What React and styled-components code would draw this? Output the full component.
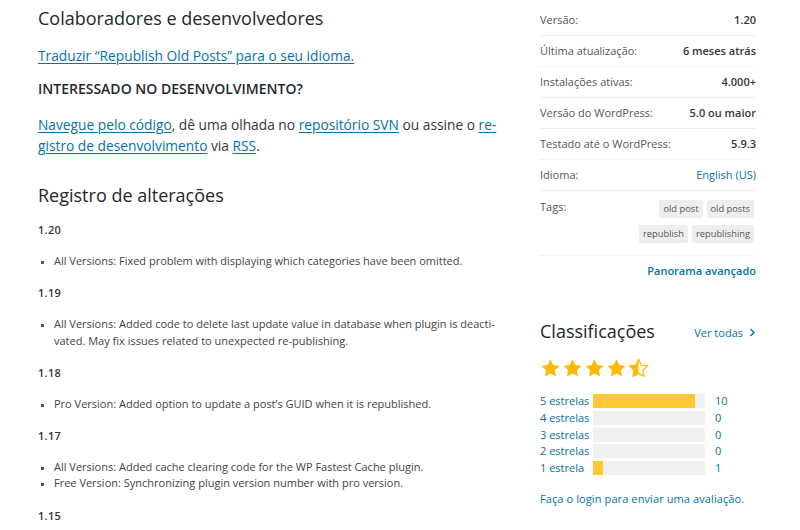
import React from "react";
import styled, { createGlobalStyle } from "styled-components";

const Global = createGlobalStyle`
  html, body { margin: 0; padding: 0; background: #fff; }
  body { font-family: "Open Sans", "Noto Sans", sans-serif; color: #32373c; }
  * { box-sizing: border-box; }
`;

const Page = styled.div`
  display: flex;
  gap: 43px;
  padding: 0 44px 0 38px;
  width: 800px;
  height: 530px;
  overflow: hidden;
`;

const Main = styled.main`
  width: 459px;
  flex: none;
  padding-top: 6px;
`;

const Side = styled.aside`
  width: 216px;
  flex: none;
  padding-top: 5px;
`;

const H2 = styled.h2`
  margin: ${(p) => p.$mt || 0}px 0 0;
  font-size: 18px;
  line-height: 24px;
  font-weight: 400;
  color: #23282d;
`;

const Para = styled.p`
  margin: ${(p) => p.$mt || 0}px 0 0;
  font-size: 13.75px;
  line-height: 21px;
  color: #32373c;
`;

const A = styled.a`
  color: #0073aa;
  text-decoration: underline;
  text-underline-offset: 2px;
`;

const H3 = styled.h3`
  margin: 13.5px 0 0;
  font-size: 14px;
  line-height: 20px;
  font-weight: 600;
  color: #23282d;
`;

const Version = styled.h4`
  margin: ${(p) => p.$mt || 0}px 0 0;
  font-size: 11px;
  line-height: 16px;
  font-weight: 600;
  letter-spacing: 0.3px;
  color: #32373c;
`;

const List = styled.ul`
  margin: 15px 0 16px;
  padding: 0 0 0 16px;
  list-style: square;
  font-size: 11px;
  line-height: 16.3px;
  color: #444;
  li::marker { font-size: 9px; color: #555; }
`;

const Row = styled.div`
  display: flex;
  justify-content: space-between;
  align-items: flex-start;
  padding: ${(p) => (p.$tags ? "8px 0 12px" : "7px 0")};
  border-bottom: 1px ${(p) => (p.$dotted ? "dotted" : "solid")} #eee;
  font-size: 11px;
  line-height: 16px;
`;

const Label = styled.span`
  color: #555;
`;

const Value = styled.strong`
  font-weight: 600;
  color: #32373c;
`;

const ValueLink = styled.a`
  color: #0073aa;
  text-decoration: none;
`;

const Tags = styled.div`
  display: flex;
  flex-wrap: wrap;
  justify-content: flex-end;
  gap: 7px 4px;
  width: 124px;
  margin-right: 2px;
  margin-top: 1px;
`;

const Tag = styled.a`
  background: #eee;
  color: #555;
  font-size: 9.3px;
  line-height: 18px;
  padding: 0 4px;
  border-radius: 2px;
  text-decoration: none;
`;

const Advanced = styled.a`
  display: block;
  text-align: right;
  margin-top: 7px;
  font-size: 11px;
  line-height: 16px;
  font-weight: 600;
  color: #0073aa;
  text-decoration: none;
`;

const RatingHead = styled.div`
  display: flex;
  justify-content: space-between;
  align-items: center;
  margin-top: 40px;
`;

const SideTitle = styled.h2`
  margin: 0;
  font-size: 18px;
  line-height: 24px;
  font-weight: 400;
  color: #23282d;
`;

const SeeAll = styled.a`
  display: flex;
  align-items: center;
  gap: 6px;
  font-size: 11px;
  color: #0073aa;
  text-decoration: none;
  margin-top: 3px;
`;

const Stars = styled.div`
  display: flex;
  gap: 1px;
  margin-top: 15px;
  height: 22px;
`;

const Bars = styled.div`
  display: flex;
  flex-direction: column;
  gap: 2.8px;
  margin-top: 14px;
`;

const BarRow = styled.div`
  display: grid;
  grid-template-columns: 49px 116px auto;
  align-items: center;
  font-size: 11px;
  line-height: 14px;
`;

const BarLabel = styled.a`
  color: #0073aa;
  text-decoration: none;
  white-space: nowrap;
`;

const Track = styled.div`
  height: 14px;
  margin: 0 0 0 4px;
  background-color: #f0f0f0;
  background-image: radial-gradient(#e4e4e4 0.6px, transparent 0.7px);
  background-size: 2px 2px;
`;

const Fill = styled.div`
  height: 100%;
  background: #ffc733;
`;

const Count = styled.span`
  color: #0073aa;
  margin-left: 10px;
`;

const Login = styled.a`
  display: block;
  margin-top: 16px;
  font-size: 11px;
  line-height: 16px;
  color: #0073aa;
  text-decoration: none;
  letter-spacing: 0.1px;
`;

const STAR = "M12 1.5l3.1 6.6 7.2.9-5.3 5 1.4 7.1L12 17.6l-6.4 3.5 1.4-7.1-5.3-5 7.2-.9z";

const Star = ({ half }) => (
  <svg width="21" height="21" viewBox="0 0 24 24">
    {half ? (
      <>
        <defs>
          <clipPath id="halfclip">
            <rect x="0" y="0" width="12" height="24" />
          </clipPath>
        </defs>
        <path d={STAR} fill="none" stroke="#ffb900" strokeWidth="1.4" strokeLinejoin="round" />
        <path d={STAR} fill="#ffb900" clipPath="url(#halfclip)" />
      </>
    ) : (
      <path d={STAR} fill="#ffb900" />
    )}
  </svg>
);

const meta = [
  ["Versão:", "1.20"],
  ["Última atualização:", "6 meses atrás", true],
  ["Instalações ativas:", "4.000+"],
  ["Versão do WordPress:", "5.0 ou maior"],
  ["Testado até o WordPress:", "5.9.3", true],
];

const ratings = [
  ["5 estrelas", 10],
  ["4 estrelas", 0],
  ["3 estrelas", 0],
  ["2 estrelas", 0],
  ["1 estrela", 1],
];

export default function App() {
  return (
    <>
      <Global />
      <Page>
        <Main>
          <H2>Colaboradores e desenvolvedores</H2>
          <Para $mt={14.5}>
            <A href="#">Traduzir “Republish Old Posts” para o seu idioma.</A>
          </Para>
          <H3>INTERESSADO NO DESENVOLVIMENTO?</H3>
          <Para $mt={14.5}>
            <A href="#">Navegue pelo código</A>, dê uma olhada no{" "}
            <A href="#">repositório SVN</A> ou assine o <A href="#">re{"\u00AD"}gistro de desenvolvimento</A> via{" "}
            <A href="#">RSS</A>.
          </Para>
          <H2 $mt={27.5}>Registro de alterações</H2>
          <Version $mt={15}>1.20</Version>
          <List>
            <li>All Versions: Fixed problem with displaying which categories have been omitted.</li>
          </List>
          <Version>1.19</Version>
          <List>
            <li>
              All Versions: Added code to delete last update value in database when plugin is deacti-vated. May fix
              issues related to unexpected re-publishing.
            </li>
          </List>
          <Version>1.18</Version>
          <List>
            <li>Pro Version: Added option to update a post’s GUID when it is republished.</li>
          </List>
          <Version>1.17</Version>
          <List>
            <li>All Versions: Added cache clearing code for the WP Fastest Cache plugin.</li>
            <li>Free Version: Synchronizing plugin version number with pro version.</li>
          </List>
          <Version>1.15</Version>
        </Main>
        <Side>
          {meta.map(([l, v, dotted]) => (
            <Row key={l} $dotted={dotted}>
              <Label>{l}</Label>
              <Value>{v}</Value>
            </Row>
          ))}
          <Row>
            <Label>Idioma:</Label>
            <ValueLink href="#">English (US)</ValueLink>
          </Row>
          <Row $tags $dotted>
            <Label>Tags:</Label>
            <Tags>
              <Tag href="#">old post</Tag>
              <Tag href="#">old posts</Tag>
              <Tag href="#">republish</Tag>
              <Tag href="#">republishing</Tag>
            </Tags>
          </Row>
          <Advanced href="#">Panorama avançado</Advanced>
          <RatingHead>
            <SideTitle>Classificações</SideTitle>
            <SeeAll href="#">
              Ver todas
              <svg width="7" height="9" viewBox="0 0 7 9">
                <path d="M1.5 1l3.5 3.5L1.5 8" fill="none" stroke="#0073aa" strokeWidth="1.4" />
              </svg>
            </SeeAll>
          </RatingHead>
          <Stars>
            <Star />
            <Star />
            <Star />
            <Star />
            <Star half />
          </Stars>
          <Bars>
            {ratings.map(([l, n]) => (
              <BarRow key={l}>
                <BarLabel href="#">{l}</BarLabel>
                <Track>
                  <Fill style={{ width: `${(n / 11) * 100}%` }} />
                </Track>
                <Count>{n}</Count>
              </BarRow>
            ))}
          </Bars>
          <Login href="#">Faça o login para enviar uma avaliação.</Login>
        </Side>
      </Page>
    </>
  );
}
